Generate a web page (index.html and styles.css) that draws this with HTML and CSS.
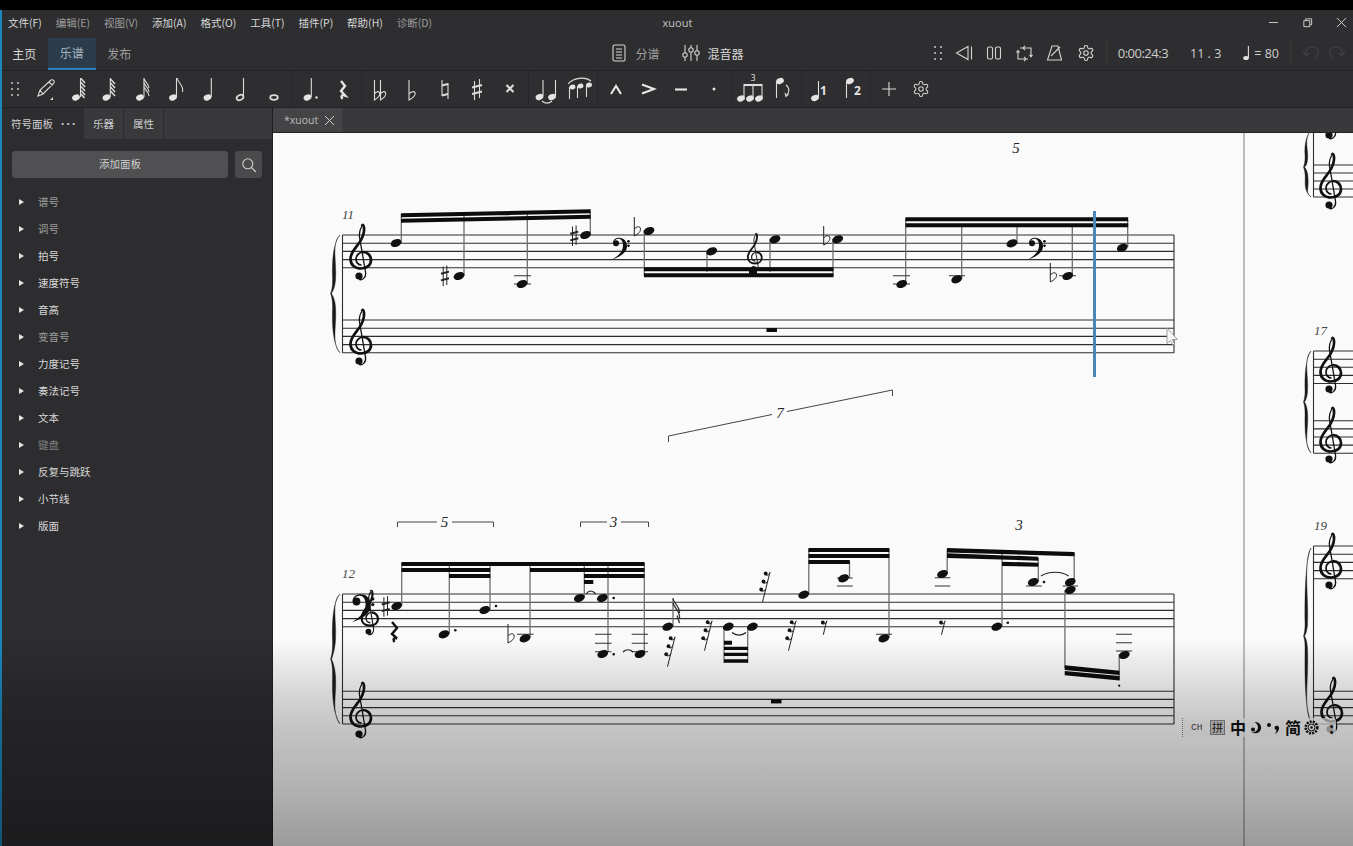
FILE: index.html
```html
<!DOCTYPE html>
<html lang="zh">
<head>
<meta charset="utf-8">
<title>xuout</title>
<link rel="stylesheet" href="styles.css">
</head>
<body>
<svg class="sprite" aria-hidden="true">
  <defs>
    <g id="gear"><path d="M12.22 2h-.44a2 2 0 0 0-2 2v.18a2 2 0 0 1-1 1.73l-.43.25a2 2 0 0 1-2 0l-.15-.08a2 2 0 0 0-2.73.73l-.22.38a2 2 0 0 0 .73 2.73l.15.1a2 2 0 0 1 1 1.72v.51a2 2 0 0 1-1 1.74l-.15.09a2 2 0 0 0-.73 2.73l.22.38a2 2 0 0 0 2.73.73l.15-.08a2 2 0 0 1 2 0l.43.25a2 2 0 0 1 1 1.73V20a2 2 0 0 0 2 2h.44a2 2 0 0 0 2-2v-.18a2 2 0 0 1 1-1.73l.43-.25a2 2 0 0 1 2 0l.15.08a2 2 0 0 0 2.73-.73l.22-.39a2 2 0 0 0-.73-2.73l-.15-.08a2 2 0 0 1-1-1.74v-.5a2 2 0 0 1 1-1.74l.15-.09a2 2 0 0 0 .73-2.73l-.22-.38a2 2 0 0 0-2.73-.73l-.15.08a2 2 0 0 1-2 0l-.43-.25a2 2 0 0 1-1-1.73V4a2 2 0 0 0-2-2z"/><circle cx="12" cy="12" r="3"/></g>
    <g id="grip"><circle cx="2" cy="2" r="1"/><circle cx="8" cy="2" r="1"/><circle cx="2" cy="8" r="1"/><circle cx="8" cy="8" r="1"/><circle cx="2" cy="14" r="1"/><circle cx="8" cy="14" r="1"/></g>
    <ellipse id="h" rx="5.6" ry="3.8" transform="rotate(-22)"/>
    <ellipse id="ih" rx="4" ry="2.9" transform="rotate(-22)"/>
    <ellipse id="ih2" rx="3" ry="2.300" transform="rotate(-22)"/>
    <g id="cg">
      <path class="cg-inner" d="M.5 6C-3 6-5 3-5 0-5-4-1-7 2-7"/>
      <path class="cg-thick" d="M2-7C7-7 10-3 10 1 10 6 6 9.500 0 9.500-6 9.500-10.500 6-10.500 0-10.500-8-3-13 0-19 2-23 3.500-27 3-31 2.800-34 1.500-35 1-33"/>
      <path class="cg-thin" d="M1-33C-1-30-2-26-1.500-22L4.500 13C5.500 19 1 21.500-2 20.500"/>
      <circle cx="-2" cy="17" r="3.600"/>
    </g>
    <g id="cf">
      <circle r="3"/>
      <path d="M-3 0C-3-4 0-5.600 3-5.600 8-5.600 11-2 11 3 11 9 5 13-3.500 16 2 12.500 7 9 7 2 7-2 5-4.500 2.500-4.500 0-4.500-2-3-3 0Z"/>
      <circle cx="12.500" cy="-2" r="1.300"/><circle cx="12.500" cy="2.400" r="1.300"/>
    </g>
    <g id="sh">
      <path class="thin" d="M-1.800-9.500V10M1.800-10.500V9"/>
      <path class="thick" d="M-4-2.200 4-4.400M-4 4.400 4 2.200"/>
    </g>
    <path id="fl" class="thin" d="M-3-13V6C1 4 4 1.500 3-2 2-4-1-3.500-3-1"/>
    <g id="r32">
      <path class="thin" d="M0 0-7.500 30"/>
      <path class="thin" d="M0 1C-1 3-2.500 3.500-4 3M-2 9C-3 11-5 11.500-6.500 11M-4 17C-5 19-7 19.500-8.500 19"/>
      <circle cx="-4.300" cy="1.500" r="1.900"/><circle cx="-6.500" cy="9.500" r="1.900"/><circle cx="-8.800" cy="17.500" r="1.900"/>
    </g>
    <g id="r8">
      <path class="thin" d="M0 0-3.500 14"/>
      <path class="thin" d="M0 1C-1 3-2.500 3.500-4 3"/>
      <circle cx="-4" cy="1.800" r="1.900"/>
    </g>
  </defs>
</svg>
<div class="topbar"></div>
<div class="app">
  <div class="strip"></div>
  <div class="window">
    <header class="titlebar">
      <nav class="menu">
        <span>文件(F)</span><span class="dim">编辑(E)</span><span class="dim">视图(V)</span><span>添加(A)</span><span>格式(O)</span><span>工具(T)</span><span>插件(P)</span><span>帮助(H)</span><span class="dim">诊断(D)</span>
      </nav>
      <div class="doc-title">xuout</div>
      <div class="winctl">
        <svg viewBox="0 0 12 12"><path d="M1 6H11"/></svg>
        <svg viewBox="0 0 12 12"><path d="M2 4H8.500V10.500H2ZM4 4V2H10.500V8.500H8.500"/></svg>
        <svg viewBox="0 0 12 12"><path d="M1 1 11 11M11 1 1 11"/></svg>
      </div>
    </header>
    <div class="tabbar">
      <div class="pages">
        <span class="page">主页</span><span class="page active">乐谱</span><span class="page dim">发布</span>
      </div>
      <div class="views">
        <span class="view"><svg class="ico" width="16" height="18" viewBox="0 0 16 18"><rect x="2" y="1" width="12" height="16" rx="1.500"/><path d="M5 5H11M5 8H11M5 11H11M5 14H11"/></svg><span class="dim">分谱</span></span>
        <span class="view"><svg class="ico" width="18" height="18" viewBox="0 0 18 18"><path d="M3 1V17M9 1V17M15 1V17"/><circle class="knob" cx="3" cy="11" r="2.200"/><circle class="knob" cx="9" cy="6" r="2.200"/><circle class="knob" cx="15" cy="9" r="2.200"/></svg><span>混音器</span></span>
      </div>
      <div class="transport">
        <svg class="grip" width="10" height="16" viewBox="0 0 10 16"><use href="#grip"/></svg>
        <svg class="ico first" width="18" height="16" viewBox="0 0 18 16"><path d="M13 1.500 1.500 8 13 14.500ZM16.500 1.500V14.500"/></svg>
        <svg class="ico" width="16" height="16" viewBox="0 0 16 16"><rect x="1.500" y="2" width="5" height="12" rx="1.500"/><rect x="9.500" y="2" width="5" height="12" rx="1.500"/></svg>
        <svg class="ico" width="17" height="17" viewBox="0 0 17 17"><path d="M4 3H15V11M12 14H2V6M.5 7.500 2 5.500 3.500 7.500M9 .8 7 3 9 5.200M13.500 9.800 15 11.800 16.500 9.800M8 11.800 10 14 8 16.200"/></svg>
        <svg class="ico" width="17" height="16" viewBox="0 0 17 16"><path d="M6 1H12L15.500 15H1.500ZM5 11 14 2"/></svg>
        <svg class="ico gearico" width="18" height="18" viewBox="0 0 24 24"><use href="#gear"/></svg>
        <span class="sep"></span>
        <span class="tcode">0:00:24:3</span>
        <span class="tcode bar">11 . 3</span>
        <span class="tempo"><svg class="inote" width="7" height="16" viewBox="0 0 7 16"><ellipse cx="3" cy="13" rx="2.800" ry="2.100"/><path class="ln" d="M5.400 13V1"/></svg>= 80</span>
        <span class="sep"></span>
        <svg class="ico off" width="18" height="16" viewBox="0 0 18 16"><path d="M4 10C2 5 7 2 10 2 14 2 17 5 16 9 15.500 11 14.500 12.500 13 14M1 6 4 10.500 8 8"/></svg>
        <svg class="ico off last" width="18" height="16" viewBox="0 0 18 16"><path d="M14 10C16 5 11 2 8 2 4 2 1 5 2 9 2.500 11 3.500 12.500 5 14M17 6 14 10.500 10 8"/></svg>
      </div>
    </div>
    <div class="toolbar">
      <span class="btn narrow"><svg class="grip" width="10" height="16" viewBox="0 0 10 16"><use href="#grip"/></svg></span>
      <span class="btn"><svg class="tool" viewBox="0 0 32 36"><path class="ln nofill" d="M9 25 11 19 22 9C24 8 26 10 25 12L14 23ZM20 11 23.500 14.500M11 19 14 23"/><path class="mark" d="M24 26V29H21Z"/></svg></span>
      <span class="btn"><svg class="tool" viewBox="0 0 32 36"><use href="#ih" x="14" y="26.500"/><path class="ln" d="M18.500 26V7"/><path class="stripe" d="M19 7.500 23 12M19 11.500 23 16M19 15.500 23 20M19 19.500 23 24M19 23 22.500 27"/></svg></span>
      <span class="btn"><svg class="tool" viewBox="0 0 32 36"><use href="#ih" x="12.500" y="26.500"/><path class="ln" d="M16.300 26V7"/><path class="stripe" d="M16.500 8 21 13M16.500 12 21 17M16.500 16 21 21M16.500 20 21 25"/></svg></span>
      <span class="btn"><svg class="tool" viewBox="0 0 32 36"><use href="#ih" x="13" y="26.500"/><path class="ln" d="M17 26V7"/><path class="ln nofill" d="M17 8C18 11 22 13 22 17M17 12C18 15 22 17 22 21M17 16C18 19 22 21 22 25"/></svg></span>
      <span class="btn"><svg class="tool" viewBox="0 0 32 36"><use href="#ih" x="13" y="26.500"/><path class="ln" d="M16.500 26V7"/><path class="ln nofill" d="M17 7C18 12 24 14 22.500 21"/></svg></span>
      <span class="btn"><svg class="tool" viewBox="0 0 32 36"><use href="#ih" x="15.500" y="26.500"/><path class="ln" d="M19.300 26V7"/></svg></span>
      <span class="btn"><svg class="tool" viewBox="0 0 32 36"><ellipse class="ln nofill wide" cx="15" cy="26.500" rx="3.500" ry="2.500" transform="rotate(-22 15 26.500)"/><path class="ln" d="M18.500 26V7"/></svg></span>
      <span class="btn"><svg class="tool" viewBox="0 0 32 36"><ellipse class="ln nofill wide" cx="16" cy="26.500" rx="3.800" ry="2.300"/></svg></span>
      <span class="div"></span>
      <span class="btn"><svg class="tool" viewBox="0 0 32 36"><use href="#ih" x="13.500" y="26.500"/><path class="ln" d="M17.300 26V7"/><circle cx="22.500" cy="26.500" r="1.200"/></svg></span>
      <span class="btn"><svg class="tool" viewBox="0 0 32 36"><path class="rest" d="M14 10 18 15 14 20 18 24.500C15 23.500 13.500 25 15.500 28"/></svg></span>
      <span class="div"></span>
      <span class="btn"><svg class="tool" viewBox="0 0 32 36"><path class="ln nofill" d="M11.500 9V29C15 27 17.500 24 16.500 21.500 15.500 20 13 20.500 11.500 23M17.500 9V29C21 27 23.500 24 22.500 21.500 21.500 20 19 20.500 17.500 23"/></svg></span>
      <span class="btn"><svg class="tool" viewBox="0 0 32 36"><path class="ln nofill" d="M13 9V29C17 27 20 24 19 21.500 18 20 15 20.500 13 23"/></svg></span>
      <span class="btn"><svg class="tool" viewBox="0 0 32 36"><path class="ln nofill" d="M13 9V25M19 28V12"/><path class="ln thickish" d="M13 14.500 19 13M13 24.500 19 23"/></svg></span>
      <span class="btn"><svg class="tool" viewBox="0 0 32 36"><path class="ln nofill" d="M13.500 10V29M18.500 8V27"/><path class="ln thickish" d="M11 16.500 21 14M11 23 21 20.500"/></svg></span>
      <span class="btn"><svg class="tool" viewBox="0 0 32 36"><path class="ln thickish" d="M12.500 14 19.500 21M19.500 14 12.500 21"/></svg></span>
      <span class="div"></span>
      <span class="btn"><svg class="tool" viewBox="0 0 32 36"><use href="#ih" x="8.500" y="26"/><use href="#ih" x="21" y="26"/><path class="ln" d="M12 25V9M24.500 25V9"/><path class="ln nofill" d="M11 30C14 32.500 18 32.500 21 30"/></svg></span>
      <span class="btn"><svg class="tool" viewBox="0 0 32 36"><use href="#ih2" x="9.500" y="16"/><use href="#ih2" x="17.500" y="15"/><use href="#ih2" x="26" y="14"/><path class="ln" d="M6.500 16V28M14.500 15V27M23.500 14V26"/><path class="ln nofill" d="M5 13C10 7 22 5 28 10"/></svg></span>
      <span class="div"></span>
      <span class="btn"><svg class="tool" viewBox="0 0 32 36"><path class="ln nofill heavy" d="M11 23 16 15 21 23"/></svg></span>
      <span class="btn"><svg class="tool" viewBox="0 0 32 36"><path class="ln nofill heavy" d="M10 13.500 22 18 10 22.500"/></svg></span>
      <span class="btn"><svg class="tool" viewBox="0 0 32 36"><path class="ln nofill heavy" d="M10 18.500H22"/></svg></span>
      <span class="btn"><svg class="tool" viewBox="0 0 32 36"><circle cx="16" cy="18" r="1.500"/></svg></span>
      <span class="div"></span>
      <span class="btn"><svg class="tool" viewBox="0 0 32 36"><use href="#ih" x="7" y="27.500"/><use href="#ih" x="16" y="27.500"/><use href="#ih" x="25" y="27.500"/><path class="ln" d="M10 27V13M19 27V13M28 27V13"/><path class="ln thickish" d="M10 14H28"/><text class="tiny" x="19" y="10">3</text></svg></span>
      <span class="btn"><svg class="tool" viewBox="0 0 32 36"><use href="#ih" x="13" y="10"/><path class="ln" d="M9.500 11V27"/><path class="ln nofill" d="M19 14C23 17 22.500 22 19 25M18 22 19 25.500 21.500 23"/></svg></span>
      <span class="div"></span>
      <span class="btn"><svg class="tool" viewBox="0 0 32 36"><use href="#ih" x="12" y="27"/><path class="ln" d="M15.500 26V10"/><text class="vnum" x="20.500" y="24">1</text></svg></span>
      <span class="btn"><svg class="tool" viewBox="0 0 32 36"><use href="#ih" x="14" y="10"/><path class="ln" d="M10.500 11V27"/><text class="vnum" x="21.500" y="24">2</text></svg></span>
      <span class="div"></span>
      <span class="btn"><svg class="tool" viewBox="0 0 32 36"><path class="ln nofill" d="M16 11V25M9 18H23"/></svg></span>
      <span class="btn"><svg class="gearbtn" width="18" height="18" viewBox="0 0 24 24"><use href="#gear"/></svg></span>
    </div>
    <div class="work">
      <aside class="sidebar">
        <div class="side-tabs">
          <div class="side-tab active"><span>符号面板</span><span class="dots">···</span></div>
          <div class="side-tab dim">乐器</div>
          <div class="side-tab">属性</div>
        </div>
        <div class="side-tools">
          <div class="add-panel">添加面板</div>
          <div class="search"><svg width="16" height="16" viewBox="0 0 16 16"><circle cx="6.800" cy="6.800" r="5"/><path d="M10.500 10.500 15 15"/></svg></div>
        </div>
        <ul class="palettes">
          <li class="dim">谱号</li>
          <li class="dim">调号</li>
          <li>拍号</li>
          <li>速度符号</li>
          <li>音高</li>
          <li class="dim">变音号</li>
          <li>力度记号</li>
          <li>奏法记号</li>
          <li>文本</li>
          <li class="dimmer">键盘</li>
          <li>反复与跳跃</li>
          <li>小节线</li>
          <li>版面</li>
        </ul>
      </aside>
      <main class="doc">
        <div class="doc-tabs"><div class="doc-tab"><span>*xuout</span><svg width="11" height="11" viewBox="0 0 11 11"><path d="M1 1 10 10M10 1 1 10"/></svg></div></div>
        <div class="score">
          <svg class="sheet" width="1080" height="714" viewBox="273 132 1080 714">
            <rect class="pagegap" x="1243" y="132" width="2" height="714"/>

            <path class="staff" d="M342.500 235H1174M342.500 243.200H1174M342.500 251.400H1174M342.500 259.600H1174M342.500 267.800H1174M342.500 320H1174M342.500 328.200H1174M342.500 336.400H1174M342.500 344.600H1174M342.500 352.800H1174M342.500 235V352.800M1174 235V352.800"/>
            <path class="staff" d="M342.500 594H1174M342.500 602.200H1174M342.500 610.400H1174M342.500 618.600H1174M342.500 626.800H1174M342.500 691.200H1174M342.500 699.400H1174M342.500 707.600H1174M342.500 715.800H1174M342.500 724H1174M342.500 594V724M1174 594V724"/>
            <path class="staff" d="M1313.500 165H1353M1313.500 173H1353M1313.500 181H1353M1313.500 189H1353M1313.500 197H1353M1313.500 132V197M1313.500 351H1353M1313.500 359.200H1353M1313.500 367.300H1353M1313.500 375.400H1353M1313.500 383.500H1353M1313.500 420.700H1353M1313.500 428.900H1353M1313.500 437H1353M1313.500 445.100H1353M1313.500 453.300H1353M1313.500 351V453.300M1313.500 546H1353M1313.500 554.200H1353M1313.500 562.400H1353M1313.500 570.600H1353M1313.500 578.700H1353M1313.500 691.200H1353M1313.500 699.400H1353M1313.500 707.600H1353M1313.500 715.800H1353M1313.500 724H1353M1313.500 546V724"/>

            <path class="brace" d="M340 235C331 243 337 262 335.500 280 335 287 333 291 331.500 293.500 333 296 335 300 335.500 307 337 325 331 344 340 352.800 333 345 332 325 332.500 310 332.800 302 332 297 330.500 293.500 332 290 332.800 285 332.500 277 332 262 333 243 340 235Z"/>
            <path class="brace" d="M340 594C331 602 337 621 335.500 640 335 648 333 656 331.500 659 333 662 335 668 335.500 676 337 694 331 712 340 724 333 714 332 694 332.500 678 332.800 668 332 663 330.500 659 332 655 332.800 650 332.500 640 332 621 333 602 340 594Z"/>
            <path class="brace" d="M1311 130C1303 140 1309 150 1307.500 160 1307 164 1306 166 1304.500 167 1306 169 1308 172 1308 178 1309 190 1305 192 1311 197 1305 192 1305 186 1305.200 178 1305.300 173 1304.500 170 1303.500 167 1304.500 164 1305.300 161 1305 155 1304.500 147 1305 138 1311 130Z"/>
            <path class="brace" d="M1311 351C1303 359 1309 378 1307.500 392 1307 397 1306 400 1304.500 402 1306 404 1307 408 1307.500 412 1309 430 1303 444 1311 453 1305 445 1304.800 430 1305 414 1305.200 409 1304.500 405 1303.500 402 1304.500 399 1305.200 395 1305 390 1304.800 378 1305 359 1311 351Z"/>
            <path class="brace" d="M1311 548C1303 560 1309 600 1307.500 625 1307 630 1306 634 1304.500 636 1306 638 1307 642 1307.500 648 1309 680 1303 708 1311 722 1305 708 1304.800 680 1305 650 1305.200 642 1304.500 639 1303.500 636 1304.500 633 1305.200 629 1305 622 1304.800 600 1305 560 1311 548Z"/>

            <use href="#cg" x="361" y="259"/>
            <use href="#cg" x="361" y="344"/>
            <use href="#cf" transform="translate(616 243.300)"/>
            <use href="#cg" transform="translate(755 257) scale(.68)"/>
            <use href="#cf" transform="translate(1032 243.300)"/>
            <use href="#cg" transform="translate(370 618) scale(.8)"/>
            <use href="#cf" transform="translate(356.500 601.500) scale(1.3)"/>
            <use href="#cg" x="361" y="717"/>
            <use href="#cg" x="1331" y="188"/>
            <use href="#cg" x="1331" y="118"/>
            <use href="#cg" x="1331" y="372"/>
            <use href="#cg" x="1331" y="442"/>
            <use href="#cg" x="1331" y="568"/>
            <use href="#cg" x="1332" y="712"/>

            <text class="mno" x="342" y="219">11</text>
            <text class="mno" x="342" y="578">12</text>
            <text class="mno" x="1314" y="335">17</text>
            <text class="mno" x="1314" y="530">19</text>
            <text class="tup" x="1016" y="153">5</text>
            <text class="tup" x="1019" y="530">3</text>
            <text class="tup" x="444.500" y="527">5</text>
            <text class="tup" x="613.500" y="527">3</text>
            <text class="tup" x="780" y="418">7</text>
            <path class="brk" d="M397.500 527V522H437M452 522H493.500V527M580.500 527V522H607M621 522H648.500V527M668.500 442V436L772 414.500M787 411.500 892.500 390V396"/>

            <path class="stem" d="M401.300 243V214M464 276V216M527.300 284V214M590.300 235V212M644.300 230V276M707 251V272M770 239V272M833 239V276M905.700 284V218M961.700 279V224M1017 243V224M1072.300 276V224M1127.700 247V220"/>
            <path class="beam" d="M401 213.300 590.700 209.300V213.300L401 217.300ZM401 218.700 590.700 214.700V218.700L401 222.700ZM644 267.300H833.500V271.300H644ZM644 273.300H833.500V277.300H644ZM905.500 217.300H1128.200V221.300H905.500ZM905.500 223.300H1128.200V227.300H905.500ZM749 270H757V276H749Z"/>
            <path class="ledger" d="M514 275.800H531M514 284H531M893 275.800H910M893 284H910M949 275.800H965M1059 275.800H1076"/>
            <use href="#h" x="396" y="243"/><use href="#h" x="459" y="276"/><use href="#h" x="522" y="284"/><use href="#h" x="585.500" y="235"/><use href="#h" x="649" y="231"/><use href="#h" x="711.700" y="251.300"/><use href="#h" x="775" y="239.300"/><use href="#h" x="837.700" y="239.300"/><use href="#h" x="901.700" y="284"/><use href="#h" x="956.700" y="279.300"/><use href="#h" x="1012" y="243.300"/><use href="#h" x="1067.700" y="276"/><use href="#h" x="1122.300" y="247.700"/>
            <use href="#sh" x="445" y="276"/><use href="#sh" x="574.300" y="236"/><use href="#fl" x="637.300" y="230"/><use href="#fl" x="826.700" y="239"/><use href="#fl" x="1053.300" y="276"/>
            <rect class="beam" x="766.500" y="328" width="10.500" height="4"/>

            <path class="stem" d="M401.700 606V563M449.300 634V565M490 610V566M530 638V565M584.300 598V566M608 652V566M644.300 654V563M673 626V598M724 627V663M747.700 627V663M808.800 594V549M849.500 578V561M889 638V549M947.200 574V549M1002 626V554M1038.300 582V558M1074.200 582V553M1064.900 590V668M1119.200 654V680"/>
            <path class="beam" d="M401.500 562H644.500V566H401.500ZM401.500 568H490.300V572H401.500ZM530 568H644.500V572H530ZM449 574H490.300V578H449ZM584 574H644.500V578H584ZM584 580H593.300V584H584ZM724 646.700H748V650H724ZM724 652.700H748V656H724ZM724 659.300H748V662.700H724ZM724 640.700H732V644.700H724ZM808.500 548H889.300V552H808.500ZM808.500 554H889.300V558H808.500ZM808.500 560H849.800V564H808.500ZM947 548 1074.500 552V556.300L947 552.500ZM947 553.300 1038.300 556.700V560.700L947 558ZM1002 561.700 1038.300 562.700V566.700L1002 566ZM1064.700 665.300 1119.500 670.700V675L1064.700 670ZM1064.700 671 1119.500 676V680.500L1064.700 675.300Z"/>
            <path class="ledger" d="M517 634.300H533.500M595 634.300H611.500M595 643.300H611.500M595 651.700H611.500M631.700 634.300H648M631.700 643.300H648M631.700 651.700H648M837 578H852.700M837 586H852.700M876 634.300H892M934.700 577.700H950.300M934.700 586H950.300M1026 586H1041.800M1062.500 586H1078M1116 634.300H1132M1116 642.700H1132M1116 651H1132"/>
            <use href="#h" x="396.700" y="606"/><use href="#h" x="444" y="634.300"/><use href="#h" x="484.700" y="610"/><use href="#h" x="525" y="638.300"/><use href="#h" x="579.300" y="598"/><use href="#h" x="602.300" y="598"/><use href="#h" x="602.700" y="654"/><use href="#h" x="640" y="654"/><use href="#h" x="667.700" y="626.700"/><use href="#h" x="728.300" y="626.700"/><use href="#h" x="752.400" y="626.700"/><use href="#h" x="803.700" y="594.700"/><use href="#h" x="843.600" y="578.300"/><use href="#h" x="883.900" y="638.300"/><use href="#h" x="942.500" y="574"/><use href="#h" x="996.800" y="626.700"/><use href="#h" x="1033.200" y="582"/><use href="#h" x="1070.300" y="582"/><use href="#h" x="1070.300" y="590"/><use href="#h" x="1124.300" y="655"/>
            <circle cx="455.300" cy="630.300" r="1.300"/><circle cx="496" cy="606" r="1.300"/><circle cx="613.700" cy="598" r="1.300"/><circle cx="613.700" cy="654.300" r="1.300"/><circle cx="1007.800" cy="622.700" r="1.300"/><circle cx="1044" cy="582" r="1.300"/><circle cx="1119.200" cy="685.700" r="1.100"/>
            <use href="#sh" x="385.700" y="606.700"/><use href="#fl" x="511" y="637"/>
            <path class="quarter" d="M392 622 397 628 392 634 397 638.500C394 637.500 392.500 639 394.500 642"/>
            <path class="flag" d="M673 598.500C674 604 680 606 679.500 613M673 603C674 608 680 610 679.500 618M677 615.500 679.500 623"/>
            <use href="#r32" x="675" y="636.700"/><use href="#r32" x="712" y="620.700"/><use href="#r32" x="770" y="572"/><use href="#r32" x="796" y="620.700"/>
            <use href="#r8" x="826.800" y="620.700"/><use href="#r8" x="945" y="620.700"/>
            <path class="tie" d="M586 594C589 590 592 590 596 594M623 652C626 649 630 649 633 652M732 632.500C736 636 742 636 746 632.500M1041 576C1048 571 1062 571 1068.500 576"/>
            <rect class="beam" x="771" y="699.400" width="10.500" height="4"/>

            <rect class="playhead" x="1093" y="211" width="3" height="166"/>
            <path class="cursor" d="M1167 328V343.500L1170.500 340.500 1172.500 345 1174.500 344 1172.500 339.500 1177.500 339.500Z"/>
          </svg>
          <div class="ime">
            <span class="ime-ch">CH</span>
            <span class="ime-box">拼</span>
            <span class="ime-big">中</span>
            <svg class="ime-moon" width="12" height="14" viewBox="0 0 12 14"><path d="M4.500 1C9 .5 11.500 4 11 7.500 10.500 11.500 6.500 13.500 1 11.500 5 11.500 8 9.500 8 6.500 8 4 6.500 2 4.500 1Z"/><circle cx="3" cy="8.500" r="2"/></svg>
            <svg class="ime-moon" width="14" height="14" viewBox="0 0 14 14"><circle cx="3" cy="4" r="2"/><path d="M8.500 6.500A2.300 2.300 0 1 1 13 7.500C13 10 11 12 9 13 10 11 10.500 10 10.500 9 9.500 9 8.500 8 8.500 6.500Z"/></svg>
            <span class="ime-big">简</span>
            <svg class="ime-gear" width="15" height="15" viewBox="0 0 15 15"><circle class="teeth" cx="7.500" cy="7.500" r="5.800"/><circle class="rim" cx="7.500" cy="7.500" r="3.400"/><circle cx="7.500" cy="7.500" r="1.300"/></svg>
            <span class="ime-big colon">:</span>
          </div>
        </div>
      </main>
    </div>
  </div>
  <div class="shade"></div>
</div>
</body>
</html>
```

FILE: styles.css
```css
* { box-sizing: border-box; }
html, body { margin: 0; height: 100%; }
body {
  width: 1353px;
  height: 846px;
  overflow: hidden;
  background: #000;
  color: #d8d8d8;
  font-family: "Noto Sans CJK SC", "Noto Sans", sans-serif;
  font-size: 10.5px;
  display: flex;
  flex-direction: column;
}
.sprite { display: block; width: 0; height: 0; flex: none; }
.cg-thick { fill: none; stroke: #111; stroke-width: 2.700; }
.cg-inner { fill: none; stroke: #111; stroke-width: 1.700; }
.cg-thin { fill: none; stroke: #111; stroke-width: 1.300; }
.thin { fill: none; stroke: #222; stroke-width: 1; }
.thick { fill: none; stroke: #222; stroke-width: 2; }

.topbar { height: 10px; flex: none; background: #000; }
.app { flex: 1; display: flex; min-height: 0; position: relative; }
.strip { width: 2px; flex: none; background: #1b87bd; }
.window { flex: 1; display: flex; flex-direction: column; min-width: 0; background: #2e2e30; }
.dim { color: #9d9d9d; }
.dimmer { color: #7f7f7f; }

.titlebar {
  height: 28px;
  flex: none;
  display: grid;
  grid-template-columns: 1fr auto 1fr;
  align-items: center;
  padding: 0 6px 4px;
}
.menu { display: flex; gap: 13.900px; }
.doc-title { font-family: "Open Sans", sans-serif; font-size: 11px; color: #c4c4c4; }
.winctl { display: flex; justify-content: flex-end; gap: 23px; }
.winctl svg { width: 11px; height: 11px; fill: none; stroke: #d6d6d6; stroke-width: 1; }

.tabbar {
  height: 33px;
  flex: none;
  display: grid;
  grid-template-columns: 1fr auto 1fr;
  align-items: center;
  border-bottom: 1px solid #232325;
}
.pages { display: flex; height: 100%; margin-left: -1.500px; }
.page { width: 47.500px; display: flex; align-items: center; justify-content: center; font-size: 12px; padding-bottom: 2px; }
.page.active { background: #2b3d4d; color: #a9b6c0; border-bottom: 2px solid #2f7fc0; }
.views { display: flex; gap: 22px; font-size: 12px; margin-bottom: 2px; }
.view { display: flex; align-items: center; gap: 8px; }
.ico { fill: none; stroke: #d4d4d4; stroke-width: 1.100; }
.ico.gearico { stroke-width: 1.500; }
.ico.off { stroke: #424244; }
.knob { fill: #2e2e30; }
.transport { display: flex; align-items: center; justify-content: flex-end; gap: 11px; padding-right: 7px; height: 29px; margin-bottom: 2px; }
.transport > .ico { margin-left: 2.500px; }
.transport > .ico.first { margin-left: 1px; }
.transport > .ico.off { margin-left: 0; }
.transport > .ico.last { margin-left: -3px; }
.grip { fill: #c8c8c8; }
.sep { width: 1px; height: 26px; background: #383839; }
.tcode { font-family: "Open Sans", sans-serif; font-size: 13px; letter-spacing: -.5px; color: #cfcfcf; }
.tcode.bar { margin-left: 11px; letter-spacing: 0; font-size: 12.500px; }
.tempo { display: flex; align-items: center; gap: 4px; font-family: "Open Sans", sans-serif; font-size: 12.500px; margin-left: 11px; color: #cfcfcf; }
.inote { fill: #e0e0e0; }
.ln { stroke: #dcdcdc; stroke-width: 1.100; fill: #dcdcdc; }

.toolbar {
  height: 37px;
  flex: none;
  display: flex;
  align-items: center;
  border-bottom: 1px solid #232325;
  fill: #e4e4e4;
}
.btn { width: 32.700px; height: 36px; display: flex; align-items: center; justify-content: center; flex: none; }
.btn.narrow { width: 26.500px; }
.tool { width: 32px; height: 36px; flex: none; fill: #e4e4e4; overflow: visible; }
.nofill { fill: none; }
.wide { stroke-width: 1.700; }
.heavy { stroke-width: 2.100; stroke: #e8e8e8; }
.thickish { stroke-width: 2.100; fill: none; }
.stripe { fill: none; stroke: #dcdcdc; stroke-width: 1.500; }
.mark { fill: #dcdcdc; }
.rest { fill: none; stroke: #e4e4e4; stroke-width: 2.400; }
.tiny { font-family: "Open Sans", sans-serif; font-size: 9px; text-anchor: middle; fill: #ddd; }
.vnum { font-family: "Open Sans", sans-serif; font-weight: 700; font-size: 12px; text-anchor: middle; fill: #e4e4e4; }
.gearbtn { fill: none; stroke: #d4d4d4; stroke-width: 1.400; }
.div { width: 1px; height: 36px; background: #262628; flex: none; margin: 0 1.400px; }

.work { flex: 1; display: flex; min-height: 0; }
.sidebar { width: 271px; flex: none; background: #2d2d30; border-right: 1px solid #1f1f21; display: flex; flex-direction: column; }
.side-tabs { height: 31px; flex: none; display: flex; background: #39393b; }
.side-tab { width: 40px; display: flex; align-items: center; justify-content: center; border-right: 1px solid #2d2d30; color: #cfcfcf; white-space: nowrap; }
.side-tab.active { width: 82px; justify-content: flex-start; padding-left: 9px; gap: 8px; background: #2d2d30; border-right: 0; }
.dots { font-family: "Liberation Sans", sans-serif; font-size: 12px; letter-spacing: 1.500px; font-weight: 700; }
.side-tools { display: flex; gap: 7px; padding: 12px 10px 0 10px; }
.add-panel { flex: 1; height: 27px; background: #505052; border-radius: 3px; display: flex; align-items: center; justify-content: center; color: #cfcfcf; padding-bottom: 2px; }
.search { width: 27px; height: 27px; background: #4a4a4c; border-radius: 3px; display: flex; align-items: center; justify-content: center; }
.search svg { fill: none; stroke: #d0d0d0; stroke-width: 1.100; }
.palettes { list-style: none; margin: 10px 0 0; padding: 0 0 0 36px; }
.palettes li { height: 27px; display: flex; align-items: center; position: relative; }
.palettes li::before { content: ""; position: absolute; left: -19px; top: 10.500px; border-left: 5px solid #e4e4e4; border-top: 3px solid transparent; border-bottom: 3px solid transparent; }

.doc { flex: 1; min-width: 0; display: flex; flex-direction: column; }
.doc-tabs { height: 24px; flex: none; background: #39393b; display: flex; }
.doc-tab { width: 69px; background: #444446; display: flex; align-items: center; padding-left: 11px; gap: 6px; font-family: "Open Sans", sans-serif; font-size: 10.5px; color: #bcbcbc; }
.doc-tab svg { fill: none; stroke: #cfcfcf; stroke-width: 1; }
.score { flex: 1; position: relative; overflow: hidden; background: #fafafa; border-top: 1px solid #232325; }
.sheet { display: block; margin-top: -1px; fill: #111; }
.pagegap { fill: #bcbcbc; }
.staff { fill: none; stroke: #2e2e2e; stroke-width: 1.100; }
.stem { fill: none; stroke: #707070; stroke-width: 1.300; }
.beam { fill: #0c0c0c; }
.ledger { fill: none; stroke: #333; stroke-width: 1.100; }
.brace { fill: #1a1a1a; stroke: #1a1a1a; stroke-width: .4; }
.mno { font-family: "Liberation Serif", serif; font-style: italic; font-size: 13px; fill: #444; }
.tup { font-family: "Liberation Serif", serif; font-style: italic; font-size: 15px; fill: #222; text-anchor: middle; }
.brk { fill: none; stroke: #444; stroke-width: 1; }
.quarter { fill: none; stroke: #111; stroke-width: 2.400; }
.flag { fill: none; stroke: #333; stroke-width: 1.300; }
.tie { fill: none; stroke: #222; stroke-width: 1.200; }
.playhead { fill: #4a87b8; }
.cursor { fill: #f6f6f6; stroke: #8a8a8a; stroke-width: .8; }

.shade {
  position: absolute;
  left: 0; right: 0; top: 0; bottom: 0;
  pointer-events: none;
  background: linear-gradient(to bottom,
    rgba(0,0,0,0) 630px,
    rgba(0,0,0,.06) 650px,
    rgba(0,0,0,.16) 690px,
    rgba(0,0,0,.22) 720px,
    rgba(0,0,0,.28) 770px,
    rgba(0,0,0,.38) 836px);
}
.ime {
  position: absolute;
  left: 909px;
  top: 585px;
  width: 154px;
  height: 19px;
  display: flex;
  align-items: center;
  gap: 4px;
  padding-left: 8px;
  border-left: 1px dotted #888;
  border-radius: 0 3px 3px 0;
  background: rgba(245,245,245,.72);
  color: #111;
  fill: #111;
}
.ime-ch { width: 12px; font-family: "Liberation Mono", monospace; font-size: 9.500px; color: #444; }
.ime-box { margin-left: 3px; font-size: 11px; border: 1px solid #888; background: #d0d0d0; width: 15px; height: 15px; line-height: 13px; text-align: center; color: #222; }
.ime-big { font-size: 16px; font-weight: 700; line-height: 19px; margin-left: 1px; }
.ime-moon { flex: none; }
.ime-gear { flex: none; margin-left: -1px; fill: #111; }
.teeth { fill: none; stroke: #111; stroke-width: 2.600; stroke-dasharray: 2 1.100; }
.rim { fill: none; stroke: #111; stroke-width: 1; }
.colon { margin-left: 6px; }
```
